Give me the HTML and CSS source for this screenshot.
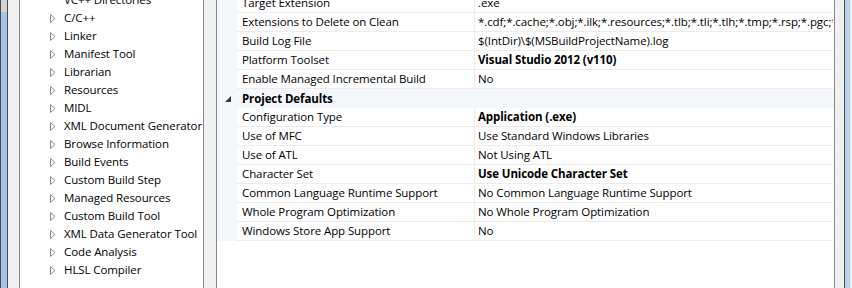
FILE: index.html
```html
<!DOCTYPE html>
<html>
<head lang="en">
    <meta charset="UTF-8">
    <title>Property Pages</title>
    <link rel="stylesheet" href="styles.css">
</head>
<body>
<div id="window">
    <div class="frame-left"></div>
    <div class="pad-left"></div>
    <div id="tree">
        <ul class="tree-list">
            <li><i class="arrow none"></i>VC++ Directories</li>
            <li><i class="arrow"><svg width="6" height="9"><polygon points="0.5,0.5 5,4.5 0.5,8.5" fill="#fff" stroke="#8a8a8a"/></svg></i>C/C++</li>
            <li><i class="arrow"><svg width="6" height="9"><polygon points="0.5,0.5 5,4.5 0.5,8.5" fill="#fff" stroke="#8a8a8a"/></svg></i>Linker</li>
            <li><i class="arrow"><svg width="6" height="9"><polygon points="0.5,0.5 5,4.5 0.5,8.5" fill="#fff" stroke="#8a8a8a"/></svg></i>Manifest Tool</li>
            <li><i class="arrow"><svg width="6" height="9"><polygon points="0.5,0.5 5,4.5 0.5,8.5" fill="#fff" stroke="#8a8a8a"/></svg></i>Librarian</li>
            <li><i class="arrow"><svg width="6" height="9"><polygon points="0.5,0.5 5,4.5 0.5,8.5" fill="#fff" stroke="#8a8a8a"/></svg></i>Resources</li>
            <li><i class="arrow"><svg width="6" height="9"><polygon points="0.5,0.5 5,4.5 0.5,8.5" fill="#fff" stroke="#8a8a8a"/></svg></i>MIDL</li>
            <li><i class="arrow"><svg width="6" height="9"><polygon points="0.5,0.5 5,4.5 0.5,8.5" fill="#fff" stroke="#8a8a8a"/></svg></i>XML Document Generator</li>
            <li><i class="arrow"><svg width="6" height="9"><polygon points="0.5,0.5 5,4.5 0.5,8.5" fill="#fff" stroke="#8a8a8a"/></svg></i>Browse Information</li>
            <li><i class="arrow"><svg width="6" height="9"><polygon points="0.5,0.5 5,4.5 0.5,8.5" fill="#fff" stroke="#8a8a8a"/></svg></i>Build Events</li>
            <li><i class="arrow"><svg width="6" height="9"><polygon points="0.5,0.5 5,4.5 0.5,8.5" fill="#fff" stroke="#8a8a8a"/></svg></i>Custom Build Step</li>
            <li><i class="arrow"><svg width="6" height="9"><polygon points="0.5,0.5 5,4.5 0.5,8.5" fill="#fff" stroke="#8a8a8a"/></svg></i>Managed Resources</li>
            <li><i class="arrow"><svg width="6" height="9"><polygon points="0.5,0.5 5,4.5 0.5,8.5" fill="#fff" stroke="#8a8a8a"/></svg></i>Custom Build Tool</li>
            <li><i class="arrow"><svg width="6" height="9"><polygon points="0.5,0.5 5,4.5 0.5,8.5" fill="#fff" stroke="#8a8a8a"/></svg></i>XML Data Generator Tool</li>
            <li><i class="arrow"><svg width="6" height="9"><polygon points="0.5,0.5 5,4.5 0.5,8.5" fill="#fff" stroke="#8a8a8a"/></svg></i>Code Analysis</li>
            <li><i class="arrow"><svg width="6" height="9"><polygon points="0.5,0.5 5,4.5 0.5,8.5" fill="#fff" stroke="#8a8a8a"/></svg></i>HLSL Compiler</li>
        </ul>
    </div>
    <div class="splitter"></div>
    <div id="grid">
        <div class="rows">
            <div class="row"><div class="gutter"></div><div class="name">Target Extension</div><div class="value">.exe</div></div>
            <div class="row"><div class="gutter"></div><div class="name">Extensions to Delete on Clean</div><div class="value">*.cdf;*.cache;*.obj;*.ilk;*.resources;*.tlb;*.tli;*.tlh;*.tmp;*.rsp;*.pgc;*.pgd;*.meta;$(TargetPath)</div></div>
            <div class="row"><div class="gutter"></div><div class="name">Build Log File</div><div class="value">$(IntDir)\$(MSBuildProjectName).log</div></div>
            <div class="row"><div class="gutter"></div><div class="name">Platform Toolset</div><div class="value bold">Visual Studio 2012 (v110)</div></div>
            <div class="row"><div class="gutter"></div><div class="name">Enable Managed Incremental Build</div><div class="value">No</div></div>
            <div class="category"><div class="gutter"><svg width="6" height="6"><polygon points="6,0 6,6 0,6" fill="#3c3c3c"/></svg></div><div class="cat-name">Project Defaults</div></div>
            <div class="row"><div class="gutter"></div><div class="name">Configuration Type</div><div class="value bold">Application (.exe)</div></div>
            <div class="row"><div class="gutter"></div><div class="name">Use of MFC</div><div class="value">Use Standard Windows Libraries</div></div>
            <div class="row"><div class="gutter"></div><div class="name">Use of ATL</div><div class="value">Not Using ATL</div></div>
            <div class="row"><div class="gutter"></div><div class="name">Character Set</div><div class="value bold">Use Unicode Character Set</div></div>
            <div class="row"><div class="gutter"></div><div class="name">Common Language Runtime Support</div><div class="value">No Common Language Runtime Support</div></div>
            <div class="row"><div class="gutter"></div><div class="name">Whole Program Optimization</div><div class="value">No Whole Program Optimization</div></div>
            <div class="row"><div class="gutter"></div><div class="name">Windows Store App Support</div><div class="value">No</div></div>
        </div>
    </div>
    <div class="pad-right"></div>
    <div class="frame-right"></div>
</div>
</body>
</html>
```

FILE: styles.css
```css
*{
    margin: 0;
    padding: 0;
}
body{
    font: 11.5px "Open Sans", "Noto Sans", sans-serif;
    letter-spacing: -0.1px;
    color: #000;
    background: #f0f0f0;
}
#window{
    display: flex;
    height: 288px;
    width: 852px;
    overflow: hidden;
}
.frame-left{
    width: 6px;
    border-left: 1px solid #4a4a4a;
    border-right: 1px solid #4a4a4a;
    background: linear-gradient(#d4d4d4 0 12px, #a6c4e8 12px);
}
.pad-left{
    width: 11px;
    background: #f0f0f0;
}
#tree{
    width: 183px;
    background: #fff;
    border-left: 1px solid #828790;
    border-right: 1px solid #828790;
    overflow: hidden;
}
.tree-list{
    list-style: none;
    margin-top: -9px;
}
.tree-list li{
    height: 18px;
    line-height: 18px;
    display: flex;
    align-items: center;
    padding-left: 30px;
    white-space: nowrap;
}
.arrow{
    width: 6px;
    height: 9px;
    margin-right: 8px;
    display: flex;
}
.splitter{
    width: 12px;
    background: #f0f0f0;
}
#grid{
    width: 617px;
    background: #fff;
    border-left: 1px solid #828790;
    border-right: 1px solid #828790;
    overflow: hidden;
}
.rows{
    margin-top: -6px;
}
.row, .category{
    display: flex;
    height: 19px;
}
.gutter{
    width: 20px;
    flex: none;
    background: #f4f7fc;
    display: flex;
    align-items: center;
    padding-left: 8px;
    box-sizing: border-box;
}
.name, .value{
    line-height: 18px;
    border-bottom: 1px solid #ececec;
    white-space: nowrap;
    overflow: hidden;
}
.name{
    width: 232px;
    flex: none;
    padding-left: 5px;
    border-right: 1px solid #ececec;
}
.value{
    flex: 1;
    padding-left: 3px;
    margin-right: 1px;
}
.bold, .cat-name{
    font-weight: bold;
}
.category{
    background: #f4f7fc;
}
.category .gutter{
    padding-top: 1px;
}
.cat-name{
    line-height: 19px;
    padding-left: 5px;
}
.pad-right{
    width: 9px;
    background: #f0f0f0;
}
.frame-right{
    width: 7px;
    border-left: 1px solid #4a4a4a;
    background: linear-gradient(90deg, #b8d1ef 0 5px, #e4ecf6 5px);
}
```
